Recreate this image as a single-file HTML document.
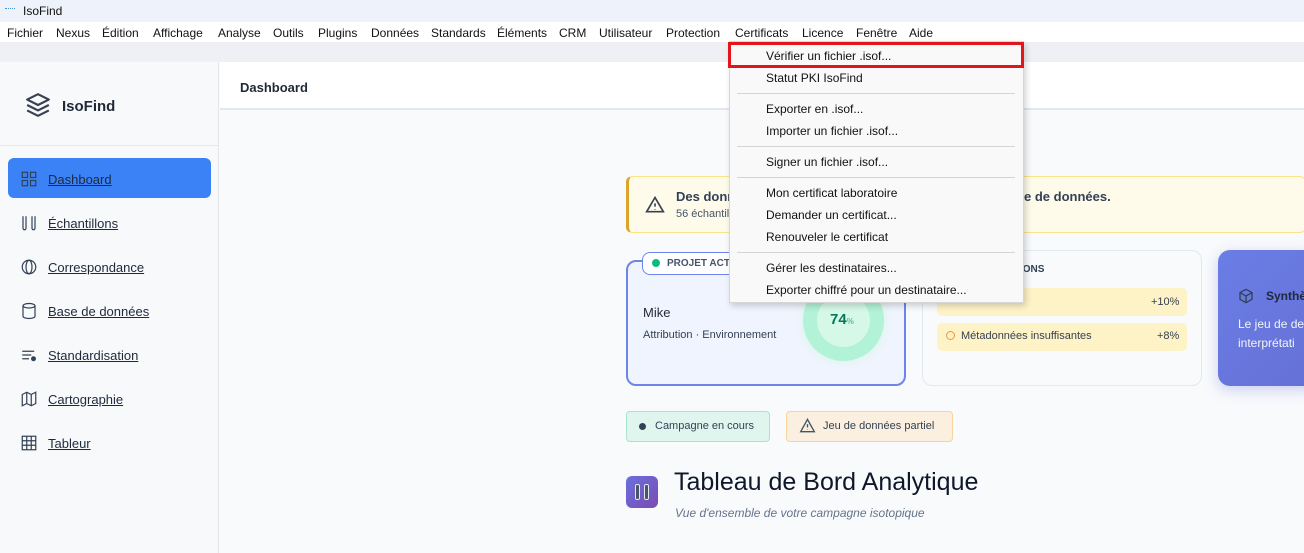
<!DOCTYPE html><html><head><meta charset="utf-8"><style>
*{box-sizing:border-box;margin:0;padding:0}
body{width:1304px;height:553px;overflow:hidden;position:relative;font-family:"Liberation Sans",sans-serif;background:#f8fafc;color:#1f2937}
.a{position:absolute;white-space:nowrap}
.mb span{position:absolute;top:26px;font-size:12px;color:#111}
.nav{position:absolute;left:20px;font-size:13px;color:#1e293b;text-decoration:underline;display:flex;align-items:center}
.nav svg{width:18px;height:18px;margin-right:10px;stroke:#334155;fill:none;stroke-width:1.6}
.mi{position:absolute;left:766px;font-size:12px;color:#111}
.sep{position:absolute;left:737px;width:278px;height:1px;background:#d4d4d4}
</style></head><body>
<div class="a" style="left:0;top:0;width:1304px;height:22px;background:#eef2fa"></div>
<div class="a" style="left:5px;top:8px;width:10px;height:4px;border-top:1px dotted #4a90d9"></div>
<div class="a" style="left:23px;top:4px;font-size:12px;color:#111">IsoFind</div>
<div class="a" style="left:0;top:22px;width:1304px;height:20px;background:#fff"></div>
<div class="mb"><span style="left:7px">Fichier</span><span style="left:56px">Nexus</span><span style="left:102px">Édition</span><span style="left:153px">Affichage</span><span style="left:218px">Analyse</span><span style="left:273px">Outils</span><span style="left:318px">Plugins</span><span style="left:371px">Données</span><span style="left:431px">Standards</span><span style="left:497px">Éléments</span><span style="left:559px">CRM</span><span style="left:599px">Utilisateur</span><span style="left:666px">Protection</span><span style="left:735px">Certificats</span><span style="left:802px">Licence</span><span style="left:856px">Fenêtre</span><span style="left:909px">Aide</span></div>
<div class="a" style="left:0;top:42px;width:1304px;height:20px;background:#eef0f5"></div>
<!-- sidebar -->
<div class="a" style="left:0;top:62px;width:219px;height:491px;background:#f8f9fb;border-right:1px solid #e5e7eb"></div>
<div class="a" style="left:0;top:145px;width:219px;height:1px;background:#e5e7eb"></div>
<svg class="a" style="left:25px;top:92px" width="26" height="26" viewBox="0 0 24 24" fill="none" stroke="#374151" stroke-width="2" stroke-linejoin="round"><path d="M12 2 2 7l10 5 10-5-10-5z"/><path d="m2 12 10 5 10-5"/><path d="m2 17 10 5 10-5"/></svg>
<div class="a" style="left:62px;top:98px;font-size:15px;font-weight:bold;color:#1f2937">IsoFind</div>
<div class="a" style="left:8px;top:158px;width:203px;height:40px;background:#3b82f6;border-radius:6px"></div>
<div class="nav" style="top:170px"><svg viewBox="0 0 24 24"><rect x="3" y="3" width="7" height="7"/><rect x="14" y="3" width="7" height="7"/><rect x="3" y="14" width="7" height="7"/><rect x="14" y="14" width="7" height="7"/></svg>Dashboard</div>
<div class="nav" style="top:214px"><svg viewBox="0 0 24 24"><path d="M4 3v16a2 2 0 0 0 4 0V3M16 3v16a2 2 0 0 0 4 0V3"/></svg>Échantillons</div>
<div class="nav" style="top:258px"><svg viewBox="0 0 24 24"><circle cx="12" cy="12" r="9"/><ellipse cx="12" cy="12" rx="4" ry="9"/></svg>Correspondance</div>
<div class="nav" style="top:302px"><svg viewBox="0 0 24 24"><ellipse cx="12" cy="5" rx="8" ry="3"/><path d="M4 5v14c0 1.7 3.6 3 8 3s8-1.3 8-3V5"/></svg>Base de données</div>
<div class="nav" style="top:346px"><svg viewBox="0 0 24 24"><path d="M3 7h16M3 12h12M3 17h9"/><circle cx="18" cy="17" r="2.5" fill="#334155"/></svg>Standardisation</div>
<div class="nav" style="top:390px"><svg viewBox="0 0 24 24"><path d="M3 6l6-3 6 3 6-3v15l-6 3-6-3-6 3z M9 3v15 M15 6v15"/></svg>Cartographie</div>
<div class="nav" style="top:434px"><svg viewBox="0 0 24 24"><rect x="3" y="3" width="18" height="18"/><path d="M3 9h18M3 15h18M9 3v18M15 3v18"/></svg>Tableur</div>
<!-- header -->
<div class="a" style="left:220px;top:62px;width:1084px;height:48px;background:#fff;border-bottom:2px solid #e2e8f0"></div>
<div class="a" style="left:240px;top:80px;font-size:13px;font-weight:bold;color:#1f2937">Dashboard</div>
<!-- alert -->
<div class="a" style="left:626px;top:176px;width:680px;height:57px;background:#fefbea;border:1px solid #fbe38a;border-left:3px solid #e0a32a;border-radius:6px"></div>
<svg class="a" style="left:645px;top:195px" width="20" height="20" viewBox="0 0 24 24" fill="none" stroke="#374151" stroke-width="2"><path d="M12 3 2 20h20z"/><path d="M12 10v4M12 17v.5"/></svg>
<div class="a" style="left:676px;top:189px;font-size:13px;font-weight:bold;color:#334155">Des donn</div>
<div class="a" style="left:1024px;top:189px;font-size:13px;font-weight:bold;color:#334155">e de données.</div>
<div class="a" style="left:676px;top:208px;font-size:11px;color:#475569">56 échantil</div>
<!-- project card -->
<div class="a" style="left:626px;top:260px;width:280px;height:126px;background:#f0f4fe;border:2px solid #6d85e8;border-radius:10px"></div>
<div class="a" style="left:642px;top:252px;width:100px;height:23px;background:#fff;border:1px solid #6d85e8;border-radius:8px"></div>
<div class="a" style="left:652px;top:259px;width:8px;height:8px;border-radius:50%;background:#10b981"></div>
<div class="a" style="left:667px;top:258px;font-size:10px;font-weight:bold;color:#475569">PROJET ACTI</div>
<div class="a" style="left:643px;top:305px;font-size:13px;color:#1f2937">Mike</div>
<div class="a" style="left:643px;top:329px;font-size:11px;color:#334155">Attribution · Environnement</div>
<div class="a" style="left:803px;top:280px;width:81px;height:81px;border-radius:50%;background:#b2f2d6;box-shadow:0 0 10px #d2f7e6"></div>
<div class="a" style="left:817px;top:294px;width:53px;height:53px;border-radius:50%;background:#d6f8e8"></div>
<div class="a" style="left:830px;top:311px;font-size:15px;font-weight:bold;color:#047857">74<span style="font-size:8px;color:#6b9">%</span></div>
<!-- reco card -->
<div class="a" style="left:922px;top:250px;width:280px;height:136px;background:#f8fafc;border:1px solid #e2e8f0;border-radius:10px"></div>
<div class="a" style="left:1020px;top:264px;font-size:10px;font-weight:bold;color:#334155">IONS</div>
<div class="a" style="left:937px;top:288px;width:250px;height:28px;background:#fef3c7;border-radius:5px"></div>
<div class="a" style="left:1151px;top:296px;font-size:11px;color:#374151">+10%</div>
<div class="a" style="left:937px;top:323px;width:250px;height:28px;background:#fef3c7;border-radius:5px"></div>
<div class="a" style="left:946px;top:331px;width:9px;height:9px;border:1px solid #e59a3a;border-radius:50%"></div>
<div class="a" style="left:961px;top:330px;font-size:11px;color:#374151">Métadonnées insuffisantes</div>
<div class="a" style="left:1157px;top:330px;font-size:11px;color:#374151">+8%</div>
<!-- purple card -->
<div class="a" style="left:1218px;top:250px;width:100px;height:136px;background:linear-gradient(135deg,#6a7ee6,#6670d6);border-radius:12px;box-shadow:0 4px 14px rgba(100,110,220,.3)"></div>
<svg class="a" style="left:1238px;top:288px" width="16" height="16" viewBox="0 0 24 24" fill="none" stroke="#334155" stroke-width="2"><path d="M12 2 3 7v10l9 5 9-5V7z M3 7l9 5 9-5 M12 12v10"/></svg>
<div class="a" style="left:1266px;top:289px;font-size:12px;font-weight:bold;color:#1e293b">Synthè</div>
<div class="a" style="left:1238px;top:315px;font-size:12px;color:#f1f5f9;line-height:19px">Le jeu de de<br>interprétati</div>
<!-- chips -->
<div class="a" style="left:626px;top:411px;width:144px;height:31px;background:#e1f5ef;border:1px solid #a7e3cd;border-radius:4px"></div>
<div class="a" style="left:639px;top:423px;width:7px;height:7px;border-radius:50%;background:#334155"></div>
<div class="a" style="left:655px;top:420px;font-size:11px;color:#334155">Campagne en cours</div>
<div class="a" style="left:786px;top:411px;width:167px;height:31px;background:#fbefdf;border:1px solid #f6d49b;border-radius:4px"></div>
<svg class="a" style="left:799px;top:418px" width="17" height="15" viewBox="0 0 24 22" fill="none" stroke="#475569" stroke-width="2"><path d="M12 2 2 20h20z M12 9v5 M12 16.5v.5"/></svg>
<div class="a" style="left:823px;top:420px;font-size:11px;color:#334155">Jeu de données partiel</div>
<!-- title -->
<div class="a" style="left:626px;top:476px;width:32px;height:32px;border-radius:6px;background:linear-gradient(135deg,#6a6fe0,#7b4bb0)"></div>
<div class="a" style="left:635px;top:484px;width:5px;height:16px;border:1.5px solid #e2e8f0;background:#475569;border-radius:2px"></div>
<div class="a" style="left:644px;top:484px;width:5px;height:16px;border:1.5px solid #e2e8f0;background:#475569;border-radius:2px"></div>
<div class="a" style="left:674px;top:468px;font-size:25px;color:#0f172a">Tableau de Bord Analytique</div>
<div class="a" style="left:675px;top:506px;font-size:12px;font-style:italic;color:#64748b">Vue d'ensemble de votre campagne isotopique</div>
<!-- dropdown -->
<div class="a" style="left:729px;top:41px;width:295px;height:262px;background:#f9f9f9;border:1px solid #d6d6d6;box-shadow:2px 3px 6px rgba(0,0,0,.18)"></div>
<div class="a" style="left:728px;top:42px;width:296px;height:26px;border:3px solid #e3141c"></div>
<div class="mi" style="top:49px">Vérifier un fichier .isof...</div>
<div class="mi" style="top:71px">Statut PKI IsoFind</div>
<div class="sep" style="top:93px"></div>
<div class="mi" style="top:102px">Exporter en .isof...</div>
<div class="mi" style="top:124px">Importer un fichier .isof...</div>
<div class="sep" style="top:146px"></div>
<div class="mi" style="top:155px">Signer un fichier .isof...</div>
<div class="sep" style="top:177px"></div>
<div class="mi" style="top:186px">Mon certificat laboratoire</div>
<div class="mi" style="top:208px">Demander un certificat...</div>
<div class="mi" style="top:230px">Renouveler le certificat</div>
<div class="sep" style="top:252px"></div>
<div class="mi" style="top:261px">Gérer les destinataires...</div>
<div class="mi" style="top:283px">Exporter chiffré pour un destinataire...</div>
</body></html>
